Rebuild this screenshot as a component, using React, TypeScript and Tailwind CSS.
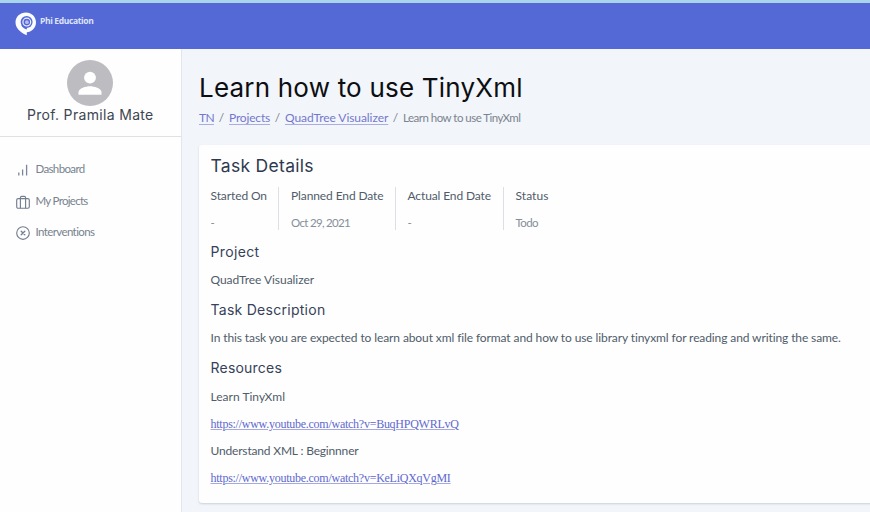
import type { ReactNode } from "react";

const BODY = "font-['Lato','Noto_Sans',sans-serif]";
const HEAD = "font-['Inter','Noto_Sans',sans-serif]";

function Logo() {
  return (
    <svg width="22" height="24" viewBox="0 0 22 24" fill="none">
      <path d="M11 0.4C5 .4.5 4.8.5 10.2c0 6 5 10.4 11.3 13V20.3C17.3 19.8 21 15.4 21 10.2 21 4.8 16.6.4 11 .4Z" fill="#fbfcff" />
      <circle cx="11.6" cy="10.1" r="6" fill="#5468d6" />
      <path d="M6.2 13 8.6 13.6 12 16.2 11.6 17.4C9.2 16.8 7.2 15.4 6.2 13Z" fill="#5468d6" />
      <circle cx="11.8" cy="10.1" r="3.9" stroke="#eef1ff" strokeWidth="1.2" />
      <circle cx="11.9" cy="10.2" r="1.9" fill="#b4bdf0" />
    </svg>
  );
}

function Avatar() {
  return (
    <svg width="46" height="46" viewBox="0 0 46 46">
      <circle cx="23" cy="23" r="23" fill="#bdbdc1" />
      <circle cx="23" cy="17.6" r="5.9" fill="#fff" />
      <path d="M11.5 34.8v-2.6c0-4 7.6-6 11.5-6s11.5 2 11.5 6v2.6Z" fill="#fff" />
    </svg>
  );
}

function BarsIcon() {
  return (
    <svg width="14" height="14" viewBox="0 0 14 14" stroke="#7c8698" strokeWidth="1.3" fill="none">
      <path d="M2.8 9.6v2.9M6.6 6.4v6.1M10.6 1.8v10.7" />
    </svg>
  );
}

function BriefcaseIcon() {
  return (
    <svg width="14" height="14" viewBox="0 0 14 14" stroke="#737e90" strokeWidth="1.15" fill="none">
      <rect x="0.7" y="3.6" width="12.6" height="9.6" rx="1.5" />
      <path d="M4.4 13.2V2.7Q4.4 1.4 5.7 1.4H8.3Q9.6 1.4 9.6 2.7V13.2" />
    </svg>
  );
}

function CircleXIcon() {
  return (
    <svg width="14" height="14" viewBox="0 0 14 14" stroke="#737e90" strokeWidth="1.15" fill="none" strokeLinecap="round">
      <circle cx="7" cy="7" r="6.3" />
      <path d="M5.2 5.2 8.8 8.8M8.8 5.2 5.2 8.8" strokeWidth="1.3" />
    </svg>
  );
}

function NavItem({ icon, children, className }: { icon: ReactNode; children: string; className: string }) {
  return (
    <a className="flex h-[31.5px] items-center pl-4">
      <span className="mt-[3px] w-[19.5px] shrink-0">{icon}</span>
      <span className={`text-[11.5px] text-[#78838f] ${className}`}>{children}</span>
    </a>
  );
}

function Heading({ children, className }: { children: string; className: string }) {
  return <h3 className={`${HEAD} flex items-center text-[14px] text-[#36425a] ${className}`}>{children}</h3>;
}

function Stat({ label, value, className, labelClass, valueClass }: { label: string; value: string; className: string; labelClass: string; valueClass: string }) {
  return (
    <div className={`h-[43px] shrink-0 ${className}`}>
      <div className={`flex h-[18px] items-center ${labelClass}`}>{label}</div>
      <div className={`mt-[9px] flex h-[17px] items-center text-[11.5px] text-[#858f9a] ${valueClass}`}>{value}</div>
    </div>
  );
}

const crumbLink = "text-[#7378cf] underline decoration-[#a9ade2] decoration-1 underline-offset-2";
const videoLink =
  "font-['Liberation_Serif',serif] text-[12px] tracking-[-0.26px] text-[#6068cd] underline decoration-[#a4a9e4] decoration-1 underline-offset-1";

export default function App() {
  return (
    <div className={`${BODY} flex h-[512px] w-[870px] flex-col overflow-hidden whitespace-nowrap bg-[#f2f5f9] text-[12px] text-[#505c6a]`}>
      <header className="h-[49px] shrink-0 border-t-[3px] border-[#a9d5ec] bg-[#5468d6]">
        <div className="flex pl-[15px] pt-[9px]">
          <Logo />
          <span className="ml-[3px] mt-[2px] font-['Open_Sans',sans-serif] text-[8.5px] font-bold leading-[14px] tracking-[-0.353px] text-[#dfe4fb]">
            Phi Education
          </span>
        </div>
      </header>
      <div className="flex min-h-0 flex-1">
        <aside className="w-[181.5px] shrink-0 border-r border-[#e2e5ec] bg-[#fefefe]">
          <div className="flex h-[88px] flex-col items-center border-b border-[#dfe1e5] pt-[11px]">
            <Avatar />
            <div className={`${HEAD} text-[14px] leading-[17px] tracking-[0.33px] text-[#3d4652]`}>Prof. Pramila Mate</div>
          </div>
          <nav className="pt-4">
            <NavItem icon={<BarsIcon />} className="tracking-[-0.64px]">Dashboard</NavItem>
            <NavItem icon={<BriefcaseIcon />} className="tracking-[-0.7px]">My Projects</NavItem>
            <NavItem icon={<CircleXIcon />} className="tracking-[-0.61px]">Interventions</NavItem>
          </nav>
        </aside>
        <main className="min-w-0 flex-1 pl-[17.5px]">
          <h1 className={`${HEAD} mt-[22px] h-[34px] text-[26px] leading-[34px] tracking-[0.2px] text-[#0c0e12]`}>
            Learn how to use TinyXml
          </h1>
          <div className="flex h-[26px] items-center text-[#7b8490]">
            <a className={`${crumbLink} w-[15px] tracking-[-0.62px]`}>TN</a>
            <span className="w-[15px] text-center">/</span>
            <a className={`${crumbLink} w-[41px] tracking-[-0.18px]`}>Projects</a>
            <span className="w-[15px] text-center">/</span>
            <a className={`${crumbLink} w-[103px] tracking-[-0.07px]`}>QuadTree Visualizer</a>
            <span className="w-[15px] text-center">/</span>
            <span className="text-[11.5px] tracking-[-0.51px]">Learn how to use TinyXml</span>
          </div>
          <section className="mt-[13.5px] h-[358px] w-[680px] rounded-[3px] bg-[#fefefe] pl-[11.5px] shadow-[0_1px_2px_rgba(90,105,130,0.25)]">
            <h2 className={`${HEAD} flex h-[42.5px] items-center pt-px text-[17.5px] tracking-[0.3px] text-[#2e394f]`}>Task Details</h2>
            <div className="flex">
              <Stat label="Started On" value="-" className="w-[68.5px] border-r border-[#dcdfe5]" labelClass="tracking-[-0.1px]" valueClass="" />
              <Stat label="Planned End Date" value="Oct 29, 2021" className="w-[116.5px] border-r border-[#dcdfe5] pl-3" labelClass="tracking-[-0.106px]" valueClass="tracking-[-0.69px]" />
              <Stat label="Actual End Date" value="-" className="w-[108px] border-r border-[#dcdfe5] pl-3" labelClass="tracking-[-0.12px]" valueClass="" />
              <Stat label="Status" value="Todo" className="pl-3" labelClass="tracking-[0.06px]" valueClass="tracking-[-0.6px]" />
            </div>
            <Heading className="h-[42px] tracking-[0.35px]">Project</Heading>
            <p className="flex h-4 items-center tracking-[-0.057px]">QuadTree Visualizer</p>
            <Heading className="h-[42px] tracking-[0.27px]">Task Description</Heading>
            <p className="flex h-4 items-center tracking-[-0.104px]">
              In this task you are expected to learn about xml file format and how to use library tinyxml for reading and writing the same.
            </p>
            <Heading className="h-[42px] tracking-[0.21px]">Resources</Heading>
            <p className="flex h-[18px] items-center tracking-[0.017px]">Learn TinyXml</p>
            <p className="flex h-9 items-center">
              <a className={videoLink}>https://www.youtube.com/watch?v=BuqHPQWRLvQ</a>
            </p>
            <p className="flex h-[18px] items-center tracking-[-0.172px]">Understand XML : Beginnner</p>
            <p className="flex h-9 items-center">
              <a className={videoLink}>https://www.youtube.com/watch?v=KeLiQXqVgMI</a>
            </p>
          </section>
        </main>
      </div>
    </div>
  );
}
